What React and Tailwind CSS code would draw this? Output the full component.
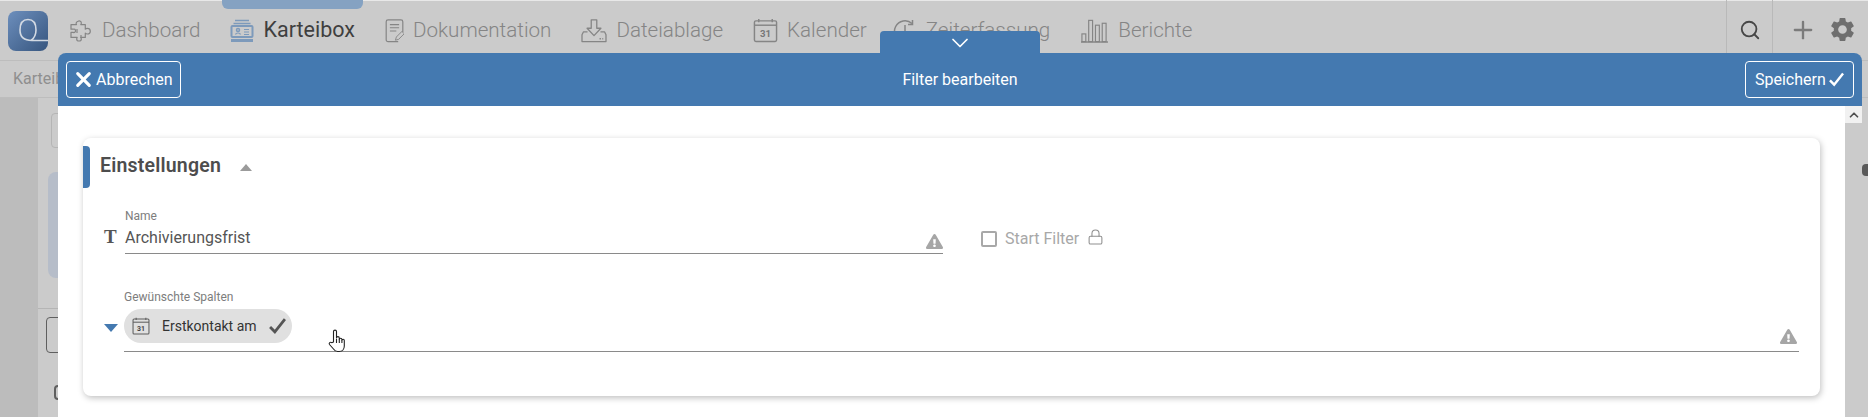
import React from "react";
import { Search, Plus, X, ChevronDown, ChevronUp, ChevronLeft, Lock } from "lucide-react";
import { MdSettings } from "react-icons/md";
import { FaExclamationTriangle } from "react-icons/fa";

const Calendar = ({ className = "", num = "#555" }) => (
  <svg viewBox="0 0 26 26" className={className} fill="none" stroke="currentColor" strokeWidth="1.5">
    <rect x="1.5" y="3" width="23" height="21.5" rx="1.5" />
    <path d="M1.5 7.5h23" strokeWidth="1.5" />
    <path d="M6 1v3.5M20 1v3.5" strokeWidth="1.5" />
    <text x="13" y="20" textAnchor="middle" fontSize="10" fontWeight="700" stroke="none" fill={num} fontFamily="Roboto, sans-serif">31</text>
  </svg>
);

const CheckMark = ({ className = "" }) => (
  <svg viewBox="0 0 16 15" className={className} fill="none" stroke="currentColor" strokeWidth="2.6">
    <path d="M1 8.500l4.500 4.500L15 1" />
  </svg>
);

const Hand = ({ className = "" }) => (
  <svg viewBox="0 0 18 24" className={className} fill="#fff" stroke="#222" strokeWidth="1.100" strokeLinejoin="round">
    <path d="M5.500 13V2.600a1.500 1.500 0 0 1 3 0V9a1.400 1.400 0 0 1 2.800 0v1.500a1.300 1.300 0 0 1 2.600 0v1a1.200 1.200 0 0 1 2.400 0V17c0 3-2 5.500-5 5.500H9.500c-2 0-3-1-4-2.500l-4-4.500c-1-1.500.8-3 2.200-1.800z" />
    <path d="M8.500 10v4M11.300 10.500V14M13.900 11.500V14" fill="none" />
  </svg>
);

const PuzzleIcon = ({ className }) => (
  <svg viewBox="0 0 24 24" className={className} fill="none" stroke="currentColor" strokeWidth="1.2" strokeLinejoin="round">
    <path d="M9 2.200c1.700-.9 3.500.2 3.300 2 0 .6-.3 1-.5 1.400h4.500v4.600c.5-.5 1.200-.8 2-.8 1.800 0 3 1.200 3 2.800s-1.200 2.800-3 2.800c-.8 0-1.500-.3-2-.8v4.200h-4.500c.3.500.5 1 .5 1.500 0 1.200-1 2.100-2.300 2.100s-2.300-.9-2.300-2.100c0-.5.2-1 .5-1.500H2v-5h2.300c1.100.4 2.200-.2 2.200-1.600s-1.100-2-2.200-1.600H2V5.600h5.500c-.8-1.100-.3-2.700 1.500-3.400z" />
    <path d="M8 10v4M12 16v3" />
  </svg>
);

const BoxIcon = ({ className }) => (
  <svg viewBox="0 0 24 24" className={className} fill="none" stroke="currentColor" strokeWidth="1.500">
    <path d="M5 1.500h14M3.500 4.500h17" />
    <rect x="1.500" y="7" width="21" height="11" rx="1" strokeWidth="2" />
    <path d="M1 21.500h22" strokeWidth="3" />
    <circle cx="8" cy="11" r="1.500" />
    <path d="M5.500 15.500c.5-2 4.500-2 5 0M14 10.500h5M14 13h5M14 15.500h5" strokeWidth="1.200" />
  </svg>
);

const DocIcon = ({ className }) => (
  <svg viewBox="0 0 20 26" className={className} fill="none" stroke="currentColor" strokeWidth="1.300">
    <path d="M14 24.500H3a2 2 0 0 1-2-2V3a2 2 0 0 1 2-2h14a2 2 0 0 1 2 2v11" />
    <path d="M5 6h10M5 9.500h10M5 13h7" />
    <path d="M11 23l1-3.500 6-6 2.500 2.500-6 6z" strokeWidth="1" />
  </svg>
);

const DownloadIcon = ({ className }) => (
  <svg viewBox="0 0 28 26" className={className} fill="none" stroke="currentColor" strokeWidth="1.400" strokeLinejoin="round">
    <path d="M11 1h6v9h4.500L14 18 6.500 10H11z" />
    <path d="M7 14H2.500L1 17v7.500h26V17l-1.500-3H21" />
    <path d="M20 21.500h1.500M23 21.500h1" strokeWidth="1.600" />
  </svg>
);

const ClockIcon = ({ className }) => (
  <svg viewBox="0 0 24 24" className={className} fill="none" stroke="currentColor" strokeWidth="1.500">
    <path d="M19 4.500A10.500 10.500 0 1 0 22.500 12" />
    <path d="M19.500 1v4.500H15M12 6v6" />
  </svg>
);

const BarsIcon = ({ className }) => (
  <svg viewBox="0 0 30 24" className={className} fill="none" stroke="currentColor" strokeWidth="1.200">
    <path d="M1 23.400h28" strokeWidth="1.500" />
    <rect x="2" y="15" width="4" height="8" />
    <rect x="9" y="1" width="4" height="22" />
    <rect x="16" y="6" width="4" height="17" />
    <rect x="23" y="4" width="4" height="19" />
  </svg>
);

const Logo = () => (
  <div className="w-10 h-10 rounded-lg bg-gradient-to-br from-[#6d8fbd] to-[#37567f] flex items-center justify-center shrink-0">
    <svg viewBox="0 0 40 40" className="w-10 h-10" fill="none" stroke="#d3dae3" strokeWidth="1.600">
      <path d="M40 29.500H24c-7 0-12-3-12-10.500C12 12 15 8.500 20 8.500S28 12 28 19c0 4-1.500 8-5 10.500" />
    </svg>
  </div>
);

const navItems = [
  { label: "Dashboard", icon: <PuzzleIcon className="w-6 h-6" /> },
  { label: "Karteibox", active: true, icon: <BoxIcon className="w-6 h-6 text-[#7d9abb]" /> },
  { label: "Dokumentation", icon: <DocIcon className="w-[19px] h-6" /> },
  { label: "Dateiablage", icon: <DownloadIcon className="w-[26px] h-6" /> },
  { label: "Kalender", icon: <Calendar className="w-[25px] h-[25px]" num="#777" /> },
  { label: "Zeiterfassung", tight: true, icon: <ClockIcon className="w-6 h-6" /> },
  { label: "Berichte", icon: <BarsIcon className="w-[29px] h-6" /> },
];

const Warn = ({ className = "" }) => (
  <FaExclamationTriangle className={"w-[17px] h-[17px] text-[#a6a6a6] shrink-0 " + className} />
);

export default function App() {
  return (
    <div
      className="relative w-[1868px] h-[417px] overflow-hidden bg-[#cbcbcb] flex flex-col"
      style={{ fontFamily: "Roboto, 'Liberation Sans', sans-serif" }}
    >
      {/* top navigation */}
      <header className="h-[60px] shrink-0 flex items-start border-t border-[#e8e8e8]">
        <div className="ml-2 mt-2.5"><Logo /></div>
        <nav className="ml-[13px] flex gap-3.5 text-[20.6px] font-light text-[#858585]">
          {navItems.map((n) => (
            <div key={n.label} className={"relative flex items-center gap-[9px] px-2 h-[61px] -mt-px " + (n.active ? "text-[#3f3f3f] font-normal text-[21.5px] " : "") + (n.tight ? "-ml-1" : "")}>
              {n.active && <span className="absolute top-0 inset-x-0 h-[9px] bg-[#85a2c2] rounded-b-md" />}
              {n.icon}
              <span className="whitespace-nowrap">{n.label}</span>
            </div>
          ))}
        </nav>
        <div className="ml-auto flex h-[53px] -mt-px">
          <div className="w-[47px] border-x border-[#b9b9b9] flex items-center justify-center pt-1.5 mr-0">
            <Search className="w-[22px] h-[22px] text-[#474747]" strokeWidth={2} />
          </div>
          <div className="w-[96px] border-l border-[#b9b9b9] -ml-px flex items-center pl-[16px] gap-[11px] pt-1.5">
            <Plus className="w-[28px] h-[28px] text-[#7b7b7b]" strokeWidth={2} />
            <MdSettings className="w-[29px] h-[29px] text-[#6f6f6f]" />
          </div>
        </div>
      </header>

      {/* breadcrumb */}
      <div className="h-[38px] shrink-0 border-y border-[#bdbdbd] flex items-center pl-[13px] text-[16px] text-[#8f8f8f]">
        <span>Karteibox</span>
      </div>

      {/* page behind the dialog */}
      <div className="flex-1 flex min-h-0">
        <div className="w-[38px] shrink-0 bg-[#bcbcbc]" />
        <div className="flex-1 flex flex-col pl-[8px]">
          <div className="ml-[5px] mt-[15px] w-[40px] h-[35px] border border-[#b5b5b5] rounded" />
          <div className="ml-[2px] mt-[24px] w-[40px] h-[106px] rounded-lg bg-[#b6bdc9]" />
          <div className="-ml-2 mt-[30px] w-[60px] border-t border-[#b5b5b5]" />
          <div className="mt-[8px] w-[40px] h-[36px] border border-[#5f5f5f] rounded" />
          <div className="ml-[8px] mt-[32px] w-[20px] h-[15px] border-2 border-[#5f5f5f] rounded-sm" />
        </div>
        <div className="w-[6px] shrink-0 overflow-hidden flex flex-col">
          <ChevronLeft className="mt-[8px] w-[24px] h-[28px] shrink-0 text-[#9a9a9a]" strokeWidth={2.5} />
          <div className="mt-[30px] w-[6px] h-[12px] rounded-l bg-[#5a5a5a] shrink-0" />
        </div>
      </div>

      {/* dialog */}
      <div className="absolute left-[58px] top-[53px] right-[6px] bottom-0 flex flex-col">
        <button className="absolute -top-[22px] left-[822px] w-[160px] h-[23px] rounded-t bg-[#4479b0] flex items-center justify-center">
          <ChevronDown className="w-[28px] h-[28px] text-white" strokeWidth={1.5} />
        </button>

        <div className="relative h-[53px] shrink-0 rounded-t-lg bg-[#4479b0] flex items-center justify-between px-2 text-white text-[16px]">
          <button className="h-[37px] w-[115px] border border-white rounded flex items-center pl-1.5 gap-0.5">
            <X className="w-[21px] h-[21px] shrink-0 scale-110" strokeWidth={3.25} />
            <span>Abbrechen</span>
          </button>
          <span className="absolute left-0 right-0 text-center pointer-events-none">Filter bearbeiten</span>
          <button className="h-[37px] w-[109px] border border-white rounded flex items-center pl-[9px] gap-[3px]">
            <span>Speichern</span>
            <CheckMark className="w-[15px] h-[15px] shrink-0" />
          </button>
        </div>

        <div className="flex-1 flex min-h-0 bg-white">
          <main className="flex-1 pt-8 px-[25px]">
            <section className="relative h-[258px] rounded-lg bg-white shadow-[1px_2px_6px_rgba(0,0,0,0.25)]">
              <span className="absolute left-0 top-2 w-[7px] h-[42px] bg-[#4479b0] rounded-r" />
              <div className="h-[54px] pl-[17px] pt-0.5 flex items-center">
                <h2 className="text-[19.5px] font-semibold text-[#4d4d4d] tracking-[0.2px]">Einstellungen</h2>
                <span className="ml-[19px] mt-0.5 w-0 h-0 border-x-[6.5px] border-x-transparent border-b-[7px] border-b-[#9b9b9b]" />
              </div>

              <div className="mt-[17px] ml-[21px] flex items-start">
                <span className="w-[21px] h-[43px] flex items-end pb-[6px] text-[19px] leading-none font-bold text-[#555] shrink-0" style={{ fontFamily: "'Liberation Serif', serif" }}>T</span>
                <div className="w-[818px]">
                  <div className="h-[14px] text-[12px] leading-[14px] text-[#7d7d7d]">Name</div>
                  <div className="h-[31px] border-b-[1.5px] border-[#8a8a8a] flex items-center justify-between">
                    <span className="text-[16px] text-[#555]">Archivierungsfrist</span>
                    <Warn className="mt-[6px]" />
                  </div>
                </div>
                <div className="ml-[38px] mt-[18px] flex items-center text-[#a8a8a8]">
                  <span className="w-4 h-4 border-2 border-[#a8a8a8] rounded-[2px]" />
                  <span className="ml-2 text-[16px]">Start Filter</span>
                  <Lock className="ml-[8px] -mt-[5px] w-[17px] h-[18px] text-[#8f8f8f]" strokeWidth={1.5} />
                </div>
              </div>

              <div className="mt-9 ml-[21px] flex items-start">
                <div className="w-5 shrink-0 pt-[34px]">
                  <div className="w-0 h-0 border-x-[7px] border-x-transparent border-t-[8px] border-t-[#4479b0]" />
                </div>
                <div className="w-[1675px]">
                  <div className="h-[14px] text-[12px] leading-[14px] text-[#7d7d7d]">Gewünschte Spalten</div>
                  <div className="relative h-[48px] border-b-[1.5px] border-[#8a8a8a] pt-[5px] flex items-start justify-between pr-0.5">
                    <div className="h-[34px] w-[168px] rounded-full bg-[#e0e0e0] flex items-center pl-2">
                      <Calendar className="w-[18px] h-[20px] text-[#5d5d5d] shrink-0" num="#444" />
                      <span className="ml-3 text-[14px] text-[#333] whitespace-nowrap">Erstkontakt am</span>
                      <CheckMark className="ml-3 w-[17px] h-[16px] text-[#555] shrink-0" />
                    </div>
                    <Warn className="mt-[19px]" />
                    <Hand className="absolute left-[204px] top-[25px] w-[18px] h-[24px]" />
                  </div>
                </div>
              </div>
            </section>
          </main>

          <div className="w-[17px] shrink-0 bg-[#cbcbcb]">
            <div className="h-[17px] bg-[#f1f1f1] flex items-center justify-center">
              <ChevronUp className="w-[14px] h-[14px] text-[#505050]" strokeWidth={3} />
            </div>
          </div>
        </div>
      </div>
    </div>
  );
}
